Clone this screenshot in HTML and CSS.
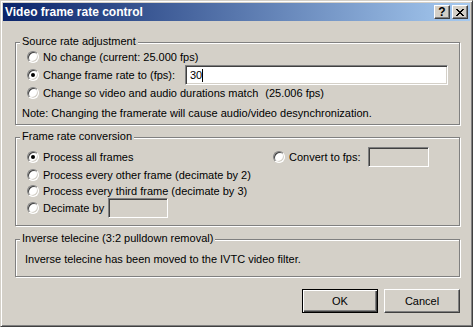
FILE: index.html
```html
<!DOCTYPE html>
<html lang="en">
<head>
    <meta charset="UTF-8">
    <title>Video frame rate control</title>
    <link rel="stylesheet" href="styles.css">
</head>
<body>
    <div class="window">
        <div class="titlebar">
            <span class="title">Video frame rate control</span>
            <div class="title-buttons">
                <span class="tbtn help">?</span>
                <span class="tbtn close">
                    <svg width="8" height="7" viewBox="0 0 8 7"><path d="M0 0h2v1h1v1h2V1h1V0h2v1H7v1H6v1H5v1h1v1h1v1h1v1H6V6H5V5H3v1H2v1H0V6h1V5h1V4h1V3H2V2H1V1H0z" fill="#000"/></svg>
                </span>
            </div>
        </div>

        <div class="client">
            <div class="group source">
                <span class="legend">Source rate adjustment</span>
                <div class="row"><span class="radio"></span><span class="label">No change (current: 25.000 fps)</span></div>
                <div class="row"><span class="radio checked"></span><span class="label">Change frame rate to (fps):</span><span class="edit rate">30<span class="caret"></span></span></div>
                <div class="row"><span class="radio"></span><span class="label">Change so video and audio durations match</span><span class="extra">(25.006 fps)</span></div>
                <div class="note">Note: Changing the framerate will cause audio/video desynchronization.</div>
            </div>

            <div class="group conversion">
                <span class="legend">Frame rate conversion</span>
                <div class="row first">
                    <div class="left"><span class="radio checked"></span><span class="label">Process all frames</span></div>
                    <span class="radio"></span><span class="label">Convert to fps:</span><span class="edit disabled fps"></span>
                </div>
                <div class="row second"><span class="radio"></span><span class="label">Process every other frame (decimate by 2)</span></div>
                <div class="row third"><span class="radio"></span><span class="label">Process every third frame (decimate by 3)</span></div>
                <div class="row fourth"><span class="radio"></span><span class="label">Decimate by</span><span class="edit disabled decimate"></span></div>
            </div>

            <div class="group telecine">
                <span class="legend">Inverse telecine (3:2 pulldown removal)</span>
                <div class="info">Inverse telecine has been moved to the IVTC video filter.</div>
            </div>

            <div class="buttons">
                <button class="btn default">OK</button>
                <button class="btn">Cancel</button>
            </div>
        </div>
    </div>
</body>
</html>
```

FILE: styles.css
```css
body {
    margin: 0;
    font-family: 'Liberation Sans', Arial, sans-serif;
    font-size: 11px;
    color: #000;
    background: #d4d0c8;
}

.window {
    width: 473px;
    height: 327px;
    box-sizing: border-box;
    background: #d4d0c8;
    border: 1px solid;
    border-color: #d4d0c8 #404040 #404040 #d4d0c8;
    box-shadow: inset 1px 1px 0 #fff, inset -1px -1px 0 #808080;
    padding: 2px;
}

/* title bar */
.titlebar {
    height: 18px;
    display: flex;
    align-items: center;
    justify-content: space-between;
    padding: 0 2px;
    background: linear-gradient(to right, #0a246a, #a6caf0);
}

.title {
    color: #fff;
    font-weight: bold;
    font-size: 12px;
}

.title-buttons {
    display: flex;
    gap: 2px;
}

.tbtn {
    width: 16px;
    height: 14px;
    box-sizing: border-box;
    display: flex;
    align-items: center;
    justify-content: center;
    background: #d4d0c8;
    border: 1px solid;
    border-color: #fff #404040 #404040 #fff;
    box-shadow: inset -1px -1px 0 #808080;
    font-weight: bold;
    font-size: 12px;
    line-height: 12px;
}

/* client area */
.client {
    padding: 21px 10px 0 12px;
}

.group {
    position: relative;
    border: 1px solid #808080;
    box-shadow: inset 1px 1px 0 #fff, 1px 1px 0 #fff;
}

.legend {
    position: absolute;
    top: -8px;
    left: 4px;
    padding: 0 2px;
    line-height: 13px;
    background: #d4d0c8;
}

.row {
    display: flex;
    align-items: center;
    height: 18px;
}

.radio {
    position: relative;
    flex: none;
    width: 12px;
    height: 12px;
    box-sizing: border-box;
    border-radius: 50%;
    border: 1px solid;
    border-color: #808080 #fff #fff #808080;
    box-shadow: inset 1px 1px 0 #404040, inset -1px -1px 0 #d4d0c8;
    background: #fff;
    margin-right: 4px;
}

.radio.checked::after {
    content: '';
    position: absolute;
    left: 3px;
    top: 3px;
    width: 4px;
    height: 4px;
    border-radius: 50%;
    background: #000;
}

.label {
    white-space: nowrap;
}

.edit {
    flex: none;
    height: 20px;
    box-sizing: border-box;
    display: flex;
    align-items: center;
    padding-left: 4px;
    background: #fff;
    border: 1px solid;
    border-color: #808080 #fff #fff #808080;
    box-shadow: inset 1px 1px 0 #404040, inset -1px -1px 0 #d4d0c8;
}

.edit.disabled {
    background: #d4d0c8;
}

.caret {
    width: 1px;
    height: 13px;
    background: #000;
}

/* source group */
.source {
    padding: 5px 11px 4px 11px;
}

.source .rate {
    width: 263px;
    margin-left: auto;
}

.source .extra {
    margin-left: 7px;
}

.note {
    margin: 5px 0 0 -5px;
    line-height: 13px;
}

/* conversion group */
.conversion {
    margin-top: 12px;
    padding: 10px 11px 7px 11px;
}

.conversion .left {
    display: flex;
    align-items: center;
    width: 246px;
}

.conversion .third {
    height: 14px;
}

.conversion .fourth {
    height: 20px;
}

.fps {
    width: 61px;
    margin-left: 7px;
}

.decimate {
    width: 60px;
    margin-left: 4px;
}

/* telecine group */
.telecine {
    margin-top: 13px;
    padding: 13px 9px 10px 9px;
}

.info {
    line-height: 13px;
}

/* buttons */
.buttons {
    display: flex;
    justify-content: flex-end;
    gap: 6px;
    margin-top: 12px;
}

.btn {
    width: 76px;
    height: 24px;
    padding: 0;
    font-family: inherit;
    font-size: 11px;
    color: #000;
    background: #d4d0c8;
    border: 1px solid;
    border-color: #fff #404040 #404040 #fff;
    box-shadow: inset -1px -1px 0 #808080;
    border-radius: 0;
}

.btn.default {
    border-color: #000;
    box-shadow: inset 1px 1px 0 #fff, inset -1px -1px 0 #404040, inset -2px -2px 0 #808080;
}
```
